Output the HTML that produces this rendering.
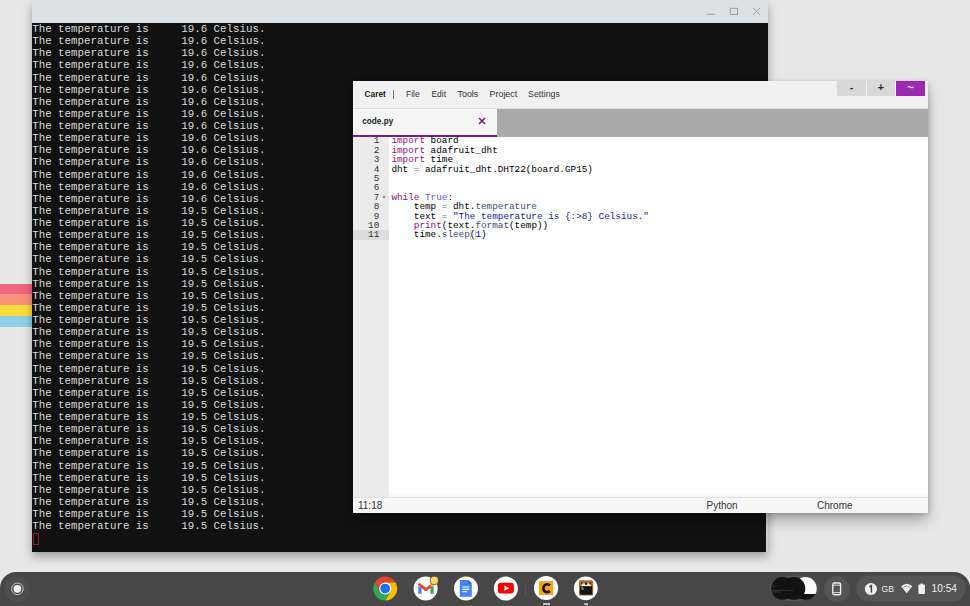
<!DOCTYPE html>
<html><head><meta charset="utf-8">
<style>
*{margin:0;padding:0;box-sizing:border-box}
html,body{width:970px;height:606px;overflow:hidden;background:#e8e8e8;font-family:"Liberation Sans",sans-serif;position:relative}
.abs{position:absolute}
#stripes div{position:absolute;left:0;width:32px}
#term{left:32px;top:0;width:736px;height:552px;background:#111;box-shadow:0 5px 9px rgba(0,0,0,0.32)}
#termbar{left:0;top:0;width:736px;height:23px;background:#dee1e3}
#termtext{left:0.2px;top:23px;font-family:"Liberation Mono",monospace;font-size:10.8px;line-height:12.12px;color:#dadada;white-space:pre}
#cursor{left:1px;top:533px;width:6px;height:12px;border:1px solid #9a1d1d}
#caret{left:353.3px;top:81.2px;width:575px;height:432px;background:#fff;box-shadow:0 8px 14px -1px rgba(0,0,0,0.32),1px 1px 4px rgba(0,0,0,0.15)}
#menubar{left:0;top:0;width:100%;height:27.8px;background:#f1f1f1;border-bottom:0.8px solid #dcdcdc}
.mi{position:absolute;top:9.1px;font-size:8.2px;color:#333;white-space:pre}
#tabbar{left:0;top:27.8px;width:100%;height:27.7px;background:#aaaaaa}
#tab{left:0;top:0;width:143.7px;height:27.7px;background:#f6f6f6;border-bottom:2.6px solid #7b1c8e}
#gutter{left:0;top:55.5px;width:35.6px;height:360.5px;background:#ebebeb}
#code{left:38.1px;top:55.1px;font-family:"Liberation Mono",monospace;font-size:9.33px;line-height:9.4px;white-space:pre;color:#000}
#nums{left:0;top:55.1px;width:26px;text-align:right;font-family:"Liberation Mono",monospace;font-size:9.33px;line-height:9.4px;white-space:pre;color:#333}
#status{left:0;top:416px;width:100%;height:16px;background:#f7f7f7;border-top:1px solid #e2e2e2}
.st{position:absolute;top:1.6px;font-size:10px;color:#333;white-space:pre}
.k{color:#930f80} .c{color:#585cf6} .s{color:#1a1aa6} .f{color:#3c4c72} .n{color:#0000cd} .o{color:#687687}
.btn{position:absolute;top:0;height:14.5px;background:#d9d9d9;color:#333;font-weight:700;font-size:11.5px;text-align:center;line-height:12.6px}
#shelf{left:0;top:572px;width:970px;height:34px;background:#464646;border-radius:18px 18px 0 0}
</style></head><body>
<div id="stripes">
<div style="top:284px;height:10px;background:#f0657f"></div>
<div style="top:294px;height:11px;background:#f8937a"></div>
<div style="top:305px;height:11px;background:#fcdc3c"></div>
<div style="top:316px;height:10.5px;background:#8dd0e6"></div>
</div>
<div id="term" class="abs">
<div id="termbar" class="abs"><svg class="abs" style="left:0;top:0" width="736" height="23" viewBox="32 0 736 23">
<path d="M706.7,14.3 H714.9" stroke="#9a9a9a" stroke-width="1"/>
<rect x="730.3" y="8.3" width="7.2" height="6.3" fill="none" stroke="#9a9a9a" stroke-width="0.9"/>
<path d="M753,8 L760,14.8 M760,8 L753,14.8" stroke="#9a9a9a" stroke-width="0.9"/>
</svg></div>
<div id="termtext" class="abs">The temperature is     19.6 Celsius.
The temperature is     19.6 Celsius.
The temperature is     19.6 Celsius.
The temperature is     19.6 Celsius.
The temperature is     19.6 Celsius.
The temperature is     19.6 Celsius.
The temperature is     19.6 Celsius.
The temperature is     19.6 Celsius.
The temperature is     19.6 Celsius.
The temperature is     19.6 Celsius.
The temperature is     19.6 Celsius.
The temperature is     19.6 Celsius.
The temperature is     19.6 Celsius.
The temperature is     19.6 Celsius.
The temperature is     19.6 Celsius.
The temperature is     19.5 Celsius.
The temperature is     19.5 Celsius.
The temperature is     19.5 Celsius.
The temperature is     19.5 Celsius.
The temperature is     19.5 Celsius.
The temperature is     19.5 Celsius.
The temperature is     19.5 Celsius.
The temperature is     19.5 Celsius.
The temperature is     19.5 Celsius.
The temperature is     19.5 Celsius.
The temperature is     19.5 Celsius.
The temperature is     19.5 Celsius.
The temperature is     19.5 Celsius.
The temperature is     19.5 Celsius.
The temperature is     19.5 Celsius.
The temperature is     19.5 Celsius.
The temperature is     19.5 Celsius.
The temperature is     19.5 Celsius.
The temperature is     19.5 Celsius.
The temperature is     19.5 Celsius.
The temperature is     19.5 Celsius.
The temperature is     19.5 Celsius.
The temperature is     19.5 Celsius.
The temperature is     19.5 Celsius.
The temperature is     19.5 Celsius.
The temperature is     19.5 Celsius.
The temperature is     19.5 Celsius.</div>
<div id="cursor" class="abs"></div>
<div class="abs" style="left:733.7px;top:513px;width:2.3px;height:39px;background:#cfcfcf"></div>
</div>
<div id="caret" class="abs">
<div id="menubar" class="abs">
<svg class="abs" style="left:0;top:0" width="300" height="27" viewBox="0 0 300 27">
<g font-family="Liberation Sans" font-size="8.4" fill="#333">
<text x="11.6" y="16.3" font-weight="700" fill="#222" textLength="21.2" lengthAdjust="spacingAndGlyphs">Caret</text>
<text x="53.1" y="16.3" textLength="13.6" lengthAdjust="spacingAndGlyphs">File</text>
<text x="78.4" y="16.3" textLength="14.6" lengthAdjust="spacingAndGlyphs">Edit</text>
<text x="104.6" y="16.3" textLength="20.6" lengthAdjust="spacingAndGlyphs">Tools</text>
<text x="136.6" y="16.3" textLength="27.6" lengthAdjust="spacingAndGlyphs">Project</text>
<text x="175.1" y="16.3" textLength="31.7" lengthAdjust="spacingAndGlyphs">Settings</text>
</g></svg>
<span class="abs" style="left:40px;top:8.4px;width:1px;height:9.8px;background:#777"></span>
<div class="btn" style="left:483.9px;width:28.8px">-</div>
<div class="btn" style="left:513.8px;width:27.5px">+</div>
<div class="btn" style="left:542.9px;width:29px;background:#9c27b0;color:#fff">~</div>
</div>
<div id="tabbar" class="abs">
<div id="tab" class="abs">
<span class="abs" style="left:9px;top:8px;font-size:8.2px;font-weight:700;color:#222">code.py</span>
<svg class="abs" style="left:125px;top:7.6px" width="8" height="8" viewBox="0 0 8 8"><path d="M1,1 L7,7 M7,1 L1,7" stroke="#7b1c8e" stroke-width="1.6"/></svg>
</div>
</div>
<div id="gutter" class="abs"></div>
<div class="abs" style="left:0;top:149.1px;width:35.6px;height:9.3px;background:#dcdcdc"></div>
<svg class="abs" style="left:0;top:0" width="40" height="130" viewBox="0 0 40 130"><path d="M29.4,115.3 H32.6 L31,117.6 Z" fill="#666"/></svg>
<div class="abs" style="left:116.3px;top:149.3px;width:6px;height:9.6px;border:0.7px solid #d6d6d6"></div>
<div id="nums" class="abs">1
2
3
4
5
6
7
8
9
10
11</div>
<div id="code" class="abs"><span class="k">import</span> board
<span class="k">import</span> adafruit_dht
<span class="k">import</span> time
dht <span class="o">=</span> adafruit_dht.DHT22(board.GP15)


<span class="k">while</span> <span class="c">True</span>:
    temp <span class="o">=</span> dht.<span class="f">temperature</span>
    text <span class="o">=</span> <span class="s">"The temperature is {:&gt;8} Celsius."</span>
    <span class="k">print</span>(text.<span class="f">format</span>(temp))
    time.<span class="f">sleep</span>(<span class="n">1</span>)</div>
<div class="abs" style="left:35.6px;top:411px;width:539.4px;height:5px;background:linear-gradient(rgba(0,0,0,0),rgba(0,0,0,0.045))"></div>
<div id="status" class="abs">
<span class="st" style="left:4.7px">11:18</span>
<span class="st" style="left:353.2px">Python</span>
<span class="st" style="left:463.7px">Chrome</span>
</div>
</div>
<svg class="abs" style="left:0;top:0" width="970" height="606" viewBox="0 0 970 606">
<path d="M0,606 L0,588 A16,16 0 0 1 16,572 L954,572 A16,16 0 0 1 970,588 L970,606 Z" fill="#474747"/>
<circle cx="17.4" cy="588.8" r="12.9" fill="#4e4e4e"/>
<circle cx="17.4" cy="588.8" r="5.8" fill="none" stroke="#cfcfcf" stroke-width="0.9"/>
<circle cx="17.4" cy="588.8" r="3.9" fill="#f0f0f0"/>
<path d="M385.20,588.60L380.00,591.60L374.81,582.60A12,12 0 0 1 395.59,582.60L385.20,582.60Z" fill="#ea4335"/><path d="M385.20,588.60L385.20,582.60L395.59,582.60A12,12 0 0 1 385.20,600.60L390.40,591.60Z" fill="#fbbc04"/><path d="M385.20,588.60L390.40,591.60L385.20,600.60A12,12 0 0 1 374.81,582.60L380.00,591.60Z" fill="#34a853"/><circle cx="385.2" cy="588.6" r="6.00" fill="#fff"/><circle cx="385.2" cy="588.6" r="4.92" fill="#1a73e8"/>
<circle cx="425.6" cy="588.6" r="12" fill="#fff"/>
<path d="M419.9,593.8 V586.5" stroke="#4285f4" stroke-width="3.3"/>
<path d="M432,593.8 V586.5" stroke="#34a853" stroke-width="3.3"/>
<path d="M419.6,584.6 L425.8,589.6 L432.2,584.6" fill="none" stroke="#ea4335" stroke-width="2.9" stroke-linejoin="round" stroke-linecap="round"/>
<path d="M432,583.6 V586.6" stroke="#fbbc04" stroke-width="3.1"/>
<circle cx="434.3" cy="580.4" r="4.1" fill="#fdd663" stroke="#474747" stroke-width="0.8"/>
<circle cx="466" cy="588.6" r="12" fill="#fff"/>
<path d="M459.8,580 H468.3 L471.8,583.5 V596.8 H459.8 Z" fill="#4285f4"/>
<path d="M468.3,580 V583.5 H471.8 Z" fill="#2a5fc9"/>
<path d="M462.3,587 H469.3 M462.3,589.4 H469.3 M462.3,591.8 H467" stroke="#fff" stroke-width="1.1"/>
<circle cx="505.9" cy="588.6" r="12" fill="#fff"/>
<rect x="497.8" y="582.8" width="16.1" height="10.7" rx="3" fill="#ff0000"/>
<path d="M504.4,585.6 L509.2,588.2 L504.4,590.8 Z" fill="#fff"/>
<path d="M525.6,584 V595.5" stroke="#5c5c5c" stroke-width="0.8"/>
<circle cx="546.1" cy="588" r="12.1" fill="#fff"/>
<rect x="539" y="581.1" width="14.2" height="13.8" fill="#f5a30f"/>
<path d="M549.7,585.6 A3.6,4 0 1 0 549.7,590.9" fill="none" stroke="#111" stroke-width="2.7"/>
<rect x="543" y="603" width="7" height="2" fill="#bdbdbd"/>
<circle cx="585.8" cy="588.3" r="11.9" fill="#fff"/>
<rect x="579" y="580.3" width="14.2" height="15.3" rx="1.5" fill="#b3682c"/>
<path d="M580.5,586.5 Q586,578.5 591.5,586.5 Z" fill="#f3ead8"/>
<circle cx="586" cy="583.6" r="1.3" fill="#111"/>
<circle cx="581.6" cy="583" r="0.8" fill="#222"/>
<circle cx="590.4" cy="583" r="0.8" fill="#222"/>
<rect x="580" y="586.2" width="12.2" height="8.5" fill="#151515"/>
<path d="M581.2,587.6 H582.6 M581.2,589 H582.6 M583.1,587.6 V590" stroke="#ddd" stroke-width="0.7"/>
<rect x="584.3" y="603.3" width="3.7" height="1.8" fill="#d8d8d8"/>
<ellipse cx="794" cy="588.4" rx="24" ry="12.2" fill="none" stroke="#5e5e5e" stroke-width="1"/>
<clipPath id="rc"><circle cx="805.5" cy="588.4" r="11.3"/></clipPath>
<g clip-path="url(#rc)"><rect x="794" y="576" width="24" height="24" fill="#111"/><rect x="794" y="576" width="24" height="18" fill="#fafafa"/></g>
<circle cx="794" cy="588.4" r="11.3" fill="#121212"/>
<circle cx="782.5" cy="588.4" r="11.3" fill="#121212"/>
<path d="M772,586.3 H775 M772,590.3 H793 M772,592 H781" stroke="#555" stroke-width="0.5"/>
<circle cx="836.8" cy="589" r="12.9" fill="#555555"/>
<rect x="832.8" y="583" width="7.8" height="11.8" rx="1.6" fill="none" stroke="#ececec" stroke-width="1.4"/>
<path d="M833,585.2 H840.4 M833,592.6 H840.4" stroke="#e8e8e8" stroke-width="0.9"/>
<rect x="856.2" y="575.6" width="109.5" height="25.9" rx="12.95" fill="#555555"/>
<circle cx="870.9" cy="589" r="6.1" fill="#f1f1f1"/>
<path d="M869.4,587 L871.4,585.6 V592.4" fill="none" stroke="#3c3c3c" stroke-width="1.5"/>
<path d="M901.1,586.2 Q906.7,581.2 912.3,586.2 L906.7,593.3 Z" fill="#f0f0f0"/><path d="M903.2,587.3 Q906.7,584.6 910.2,587.3" fill="none" stroke="#6a6a6a" stroke-width="0.7"/>
<rect x="918.4" y="584.6" width="6.5" height="9.4" rx="0.9" fill="#f0f0f0"/>
<rect x="920.4" y="583.6" width="2.5" height="1.5" fill="#f0f0f0"/>
<text x="881.6" y="592.3" font-family="Liberation Sans" font-size="9.9" textLength="12.4" lengthAdjust="spacingAndGlyphs" fill="#eeeeee">GB</text>
<text x="931.6" y="592.4" font-family="Liberation Sans" font-size="10.1" textLength="25.4" lengthAdjust="spacingAndGlyphs" fill="#eeeeee">10:54</text>
</svg>
</body></html>
